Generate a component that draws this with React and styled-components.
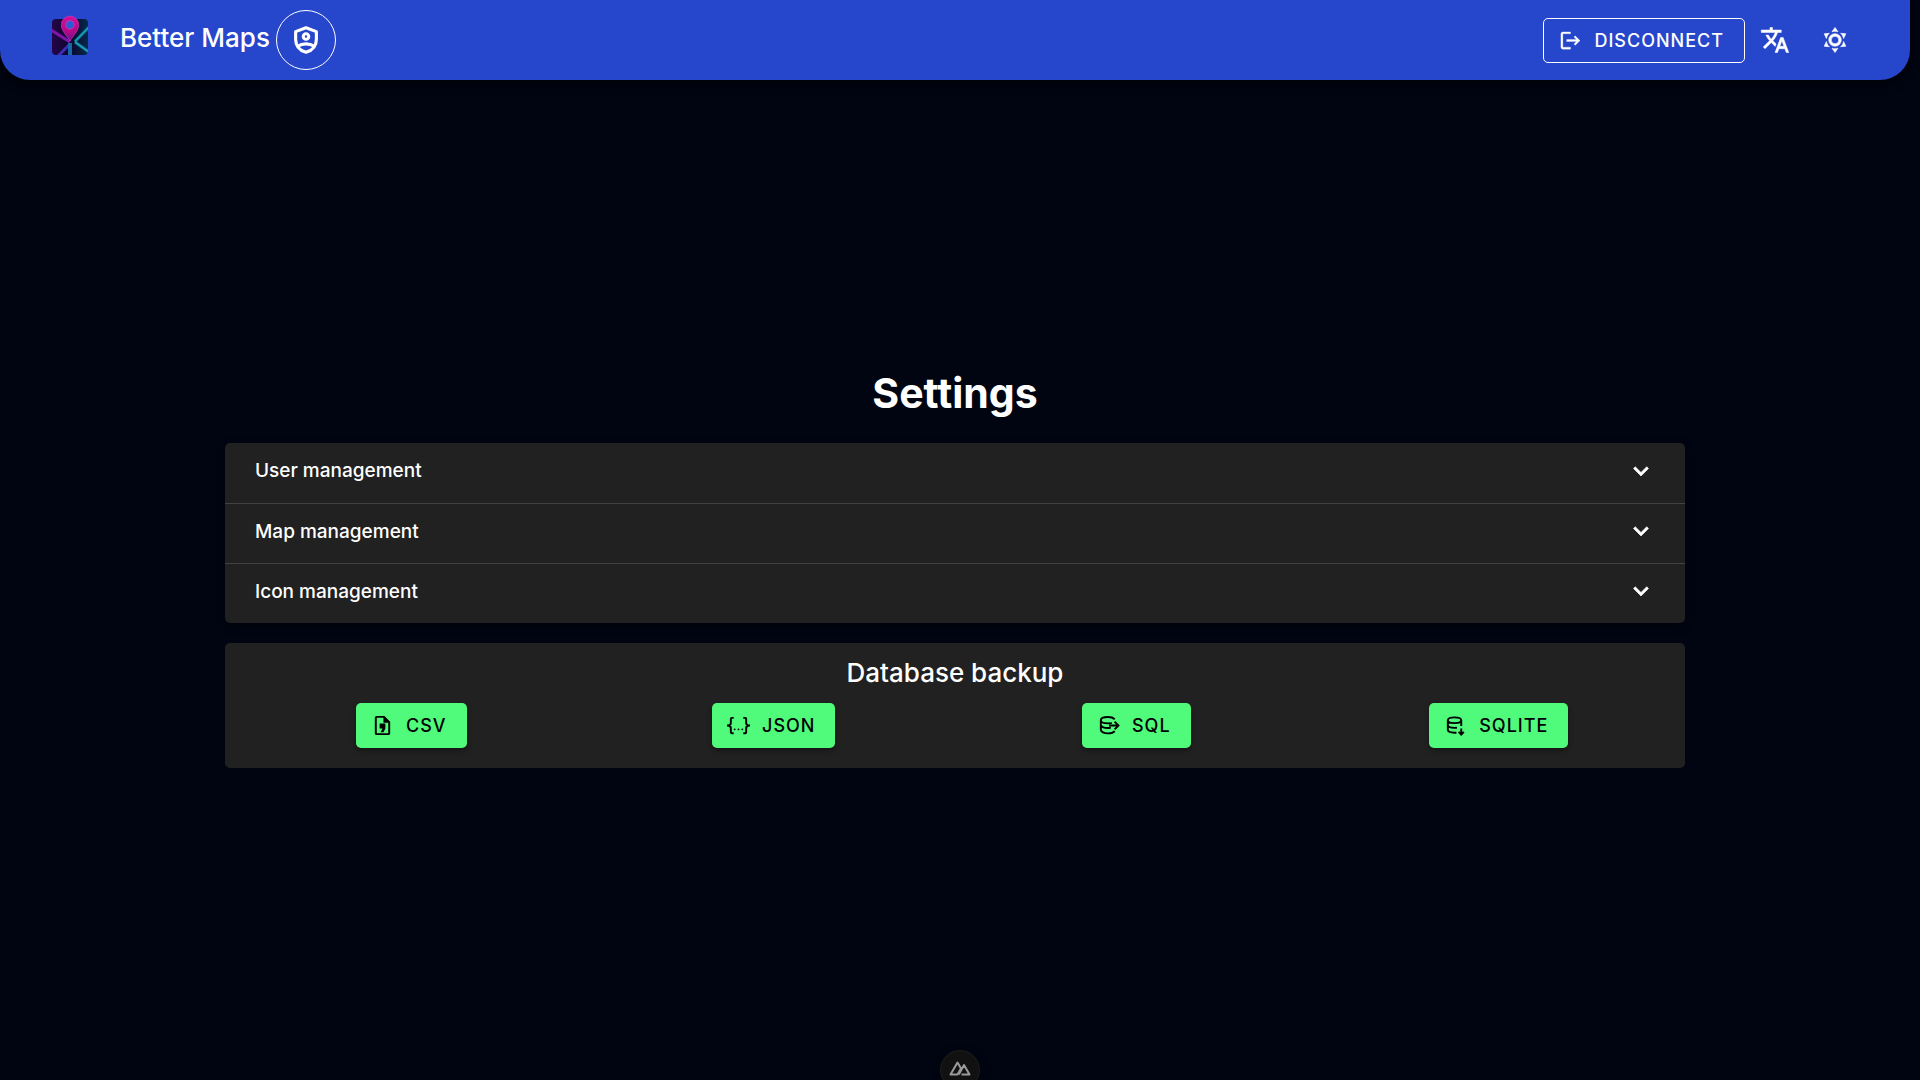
import React from "react";
import styled, { createGlobalStyle } from "styled-components";

const Global = createGlobalStyle`
  *, *::before, *::after { box-sizing: border-box; }
  html { scrollbar-width: none; }
  body {
    margin: 0;
    background: #000511;
    color: #fff;
    font-family: Inter, "Liberation Sans", sans-serif;
    -webkit-font-smoothing: antialiased;
  }
  button { font-family: inherit; color: inherit; cursor: pointer; }
  h1, h2 { margin: 0; }
`;

const Page = styled.div`
  min-height: 100vh;
  padding-right: 10px;
  display: flex;
  flex-direction: column;
`;

const AppBar = styled.header`
  display: flex;
  align-items: center;
  justify-content: space-between;
  height: 80px;
  padding: 0 45px 0 50px;
  background: #2646cc;
  border-radius: 0 0 30px 30px;
  box-shadow: 0 2px 5px rgba(0, 0, 0, 0.4), 0 4px 12px rgba(0, 0, 0, 0.3);
`;

const Group = styled.div`
  display: flex;
  align-items: center;
`;

const Brand = styled.a`
  display: flex;
  align-items: center;
  gap: 30px;
  margin-right: 6px;
  padding-bottom: 4px;
  color: inherit;
  text-decoration: none;
  font-size: 26px;
  font-weight: 500;
  line-height: 40px;
  white-space: nowrap;
`;

const RoundButton = styled.button`
  display: inline-flex;
  align-items: center;
  justify-content: center;
  width: 60px;
  height: 60px;
  padding: 0;
  border: ${(p) => (p.$outlined ? "1px solid #fff" : "0")};
  border-radius: 50%;
  background: transparent;
`;

const Button = styled.button`
  display: inline-flex;
  align-items: center;
  gap: 12px;
  height: 45px;
  padding: 0 20px 0 15px;
  border: ${(p) => (p.$outlined ? "1px solid #fff" : "0")};
  border-radius: 5px;
  background: ${(p) => (p.$outlined ? "transparent" : "#50fa7b")};
  color: ${(p) => (p.$outlined ? "#fff" : "#000")};
  box-shadow: ${(p) => (p.$outlined ? "none" : "0 3px 5px rgba(0, 0, 0, 0.35)")};
  font-size: 18px;
  font-weight: 500;
  letter-spacing: 1px;
  text-transform: uppercase;
`;

const Main = styled.main`
  flex: 1;
  display: flex;
  flex-direction: column;
  justify-content: center;
  gap: 20px;
  width: calc(100% - 450px);
  margin: 0 auto;
  padding-bottom: 30px;
`;

const Title = styled.h1`
  font-size: 41px;
  font-weight: 700;
  line-height: 60px;
  text-align: center;
`;

const Panels = styled.section`
  overflow: hidden;
  border-radius: 5px;
  background: #212121;
  box-shadow: 0 3px 8px rgba(0, 0, 0, 0.4);
`;

const PanelHeader = styled.button`
  display: flex;
  align-items: center;
  justify-content: space-between;
  width: 100%;
  height: 60px;
  padding: 0 29px 4px 30px;
  border: 0;
  background: transparent;
  font-size: 19px;
  font-weight: 500;
  text-align: left;

  & + & { border-top: 1px solid #424242; }
`;

const Card = styled.section`
  padding: 10px 5px 20px;
  border-radius: 5px;
  background: #212121;
`;

const CardTitle = styled.h2`
  margin-bottom: 10px;
  font-size: 26px;
  font-weight: 500;
  line-height: 40px;
  text-align: center;
`;

const Actions = styled.div`
  display: grid;
  grid-template-columns: repeat(4, 1fr);
  justify-items: center;
`;

const DevTools = styled.button`
  position: fixed;
  bottom: -10px;
  left: 50%;
  margin-left: -20px;
  display: flex;
  justify-content: center;
  width: 40px;
  height: 40px;
  padding: 9px 0 0;
  border: 1px solid #1d1d1d;
  border-radius: 50%;
  background: #111;
  box-shadow: 2px 2px 8px rgba(0, 0, 0, 0.4);
`;

const Filled = ({ size = 23, d, bold = 0 }) => (
  <svg width={size} height={size} viewBox="0 0 24 24" fill="currentColor" stroke="currentColor" strokeWidth={bold} aria-hidden="true"><path d={d} /></svg>
);

const Stroked = ({ size = 23, d, width = 2 }) => (
  <svg width={size} height={size} viewBox="0 0 24 24" fill="none" stroke="currentColor" strokeWidth={width} aria-hidden="true"><path d={d} /></svg>
);

const paths = {
  logout: "M17 7L15.59 8.41L18.17 11H8V13H18.17L15.59 15.58L17 17L22 12M4 5H12V3H4C2.9 3 2 3.9 2 5V19C2 20.1 2.9 21 4 21H12V19H4V5Z",
  translate: "M12.87,15.07L10.33,12.56L10.36,12.53C12.1,10.59 13.34,8.36 14.07,6H17V4H10V2H8V4H1V6H12.17C11.5,7.92 10.44,9.75 9,11.35C8.07,10.32 7.3,9.19 6.69,8H4.69C5.42,9.63 6.42,11.17 7.67,12.56L2.58,17.58L4,19L9,14L12.11,17.11L12.87,15.07M18.5,10H16.5L12,22H14L15.12,19H19.87L21,22H23L18.5,10M15.88,17L17.5,12.67L19.12,17H15.88Z",
  sun: "M12,7A5,5 0 0,1 17,12A5,5 0 0,1 12,17A5,5 0 0,1 7,12A5,5 0 0,1 12,7M12,9A3,3 0 0,0 9,12A3,3 0 0,0 12,15A3,3 0 0,0 15,12A3,3 0 0,0 12,9M12,2L14.39,5.42C13.65,5.15 12.84,5 12,5C11.16,5 10.35,5.15 9.61,5.42L12,2M3.34,7L7.5,6.65C6.9,7.16 6.36,7.78 5.94,8.5C5.5,9.24 5.25,10 5.11,10.79L3.34,7M3.36,17L5.12,13.23C5.26,14 5.53,14.78 5.95,15.5C6.37,16.24 6.91,16.86 7.5,17.37L3.36,17M20.65,7L18.88,10.79C18.74,10 18.47,9.23 18.05,8.5C17.63,7.78 17.1,7.15 16.5,6.64L20.65,7M20.64,17L16.5,17.36C17.09,16.85 17.62,16.22 18.04,15.5C18.46,14.77 18.73,14 18.87,13.21L20.64,17M12,22L9.59,18.56C10.33,18.83 11.14,19 12,19C12.82,19 13.63,18.83 14.37,18.56L12,22Z",
  chevron: "M7.41,8.58L12,13.17L16.59,8.58L18,10L12,16L6,10L7.41,8.58Z",
  csv: "M14 2H6C4.89 2 4 2.9 4 4V20C4 21.11 4.89 22 6 22H18C19.11 22 20 21.11 20 20V8L14 2M18 20H6V4H13V9H18V20M10 19L12 15H9V10H15V15L13 19H10",
  json: "M5,3H7V5H5V10A2,2 0 0,1 3,12A2,2 0 0,1 5,14V19H7V21H5C3.93,20.73 3,20.1 3,19V15A2,2 0 0,0 1,13H0V11H1A2,2 0 0,0 3,9V5A2,2 0 0,1 5,3M19,3A2,2 0 0,1 21,5V9A2,2 0 0,0 23,11H24V13H23A2,2 0 0,0 21,15V19A2,2 0 0,1 19,21H17V19H19V14A2,2 0 0,1 21,12A2,2 0 0,1 19,10V5H17V3H19M12,15A1,1 0 0,1 13,16A1,1 0 0,1 12,17A1,1 0 0,1 11,16A1,1 0 0,1 12,15M8,15A1,1 0 0,1 9,16A1,1 0 0,1 8,17A1,1 0 0,1 7,16A1,1 0 0,1 8,15M16,15A1,1 0 0,1 17,16A1,1 0 0,1 16,17A1,1 0 0,1 15,16A1,1 0 0,1 16,15Z",
  sql: "M18.5 5.5C17 4 14.4 3.2 11.5 3.2C7.3 3.2 4 4.6 4 6.5V16.5C4 18.6 7.3 20.2 11.5 20.2C14.4 20.2 17 19.4 18.5 17.8M4 6.5C4 8.6 7.3 9.8 11.5 9.8L15.5 9.5M4 11.5C4.6 13.6 7.3 14.6 11.5 14.6L14.5 14.4M12.5 12H22M18.4 8L22.4 12L18.4 16",
  sqlite: "M4 6.5C4 4.8 7.1 3.5 11 3.5S18 4.8 18 6.5S14.9 9.5 11 9.5S4 8.2 4 6.5V16.5C4 18.2 7 19.5 11 19.5H13M4 11.5C4 13.2 7 14.5 11 14.5L13.5 14.3M18 6.5V12.5M18 15V20.5M15.3 18.6L18 21.4L20.7 18.6",
};

const ShieldIcon = () => (
  <svg width="30" height="30" viewBox="0 0 24 24" fill="none" stroke="currentColor" strokeWidth="2.5" aria-hidden="true">
    <path d="M12 2.2L20.3 5.3V11.3C20.3 16.5 17 20.3 12 21.8C7 20.3 3.7 16.5 3.7 11.3V5.3Z" strokeLinejoin="round" />
    <circle cx="12" cy="9.2" r="2.2" />
    <path d="M5.5 17C9 14.4 15 14.4 18.5 17" />
  </svg>
);

const LogoSvg = styled.svg`
  overflow: visible;
`;

const Logo = () => (
  <LogoSvg width="40" height="40" viewBox="0 4 40 40" aria-hidden="true">
    <defs>
      <linearGradient id="tile" x1="0" x2="1">
        <stop offset="0" stopColor="#260548" /><stop offset="0.5" stopColor="#0b052c" /><stop offset="1" stopColor="#062a4a" />
      </linearGradient>
      <linearGradient id="pin" x1="0" y1="0" x2="0" y2="1">
        <stop offset="0" stopColor="#d3109a" /><stop offset="0.6" stopColor="#b40a86" /><stop offset="1" stopColor="#6a1290" />
      </linearGradient>
      <clipPath id="tileShape"><rect x="2" y="5" width="36" height="36" rx="4" /></clipPath>
    </defs>
    <g clipPath="url(#tileShape)" fill="none">
      <rect x="2" y="5" width="36" height="36" fill="url(#tile)" />
      <path d="M20 28L1 16" stroke="#7d16a8" strokeWidth="3" />
      <path d="M20 30L8 42" stroke="#3f2bb0" strokeWidth="3" />
      <path d="M20 29V42" stroke="#1468a8" strokeWidth="4" />
      <path d="M25 27.5L39 13M25 28L39 38" stroke="#0d7895" strokeWidth="3" />
      <path d="M25 27.5L39 13M25 28L39 38" stroke="#23b6d2" strokeWidth="1" />
    </g>
    <path fill="url(#pin)" stroke="#d03bbd" strokeWidth="0.6" d="M20 27C17 22 11.3 17 11.3 10.8A8.7 8.7 0 0 1 28.7 10.8C28.7 17 23 22 20 27Z" />
    <circle cx="20" cy="10.8" r="4.2" fill="#2b5bd0" stroke="#d03bbd" strokeWidth="0.8" />
  </LogoSvg>
);

const NuxtIcon = () => (
  <svg width="22" height="18" viewBox="0 0 22 18" fill="none" stroke="#9a9a9a" strokeWidth="2" strokeLinejoin="round" aria-hidden="true">
    <path d="M9 14.5H1.5L8.5 2.5L12 8.5L8.5 14.5M12.5 14.5H20.5L15 5L9.8 14.5" />
  </svg>
);

const sections = ["User management", "Map management", "Icon management"];
const exportsList = [
  { label: "CSV", icon: <Filled d={paths.csv} /> },
  { label: "JSON", icon: <Filled d={paths.json} /> },
  { label: "SQL", icon: <Stroked d={paths.sql} /> },
  { label: "SQLite", icon: <Stroked d={paths.sqlite} /> },
];

export default function App() {
  return (
    <Page>
      <Global />
      <AppBar>
        <Group>
          <Brand href="#"><Logo />Better Maps</Brand>
          <RoundButton $outlined aria-label="Administration"><ShieldIcon /></RoundButton>
        </Group>
        <Group>
          <Button $outlined><Filled d={paths.logout} bold={0.3} />Disconnect</Button>
          <RoundButton aria-label="Language"><Filled size={30} d={paths.translate} bold={0.4} /></RoundButton>
          <RoundButton aria-label="Theme"><Filled size={30} d={paths.sun} bold={0.5} /></RoundButton>
        </Group>
      </AppBar>
      <Main>
        <Title>Settings</Title>
        <Panels>
          {sections.map((name) => (
            <PanelHeader key={name} aria-expanded="false">{name}<Filled size={30} d={paths.chevron} bold={0.5} /></PanelHeader>
          ))}
        </Panels>
        <Card>
          <CardTitle>Database backup</CardTitle>
          <Actions>
            {exportsList.map(({ label, icon }) => <Button key={label}>{icon}{label}</Button>)}
          </Actions>
        </Card>
      </Main>
      <DevTools aria-label="Developer tools"><NuxtIcon /></DevTools>
    </Page>
  );
}
